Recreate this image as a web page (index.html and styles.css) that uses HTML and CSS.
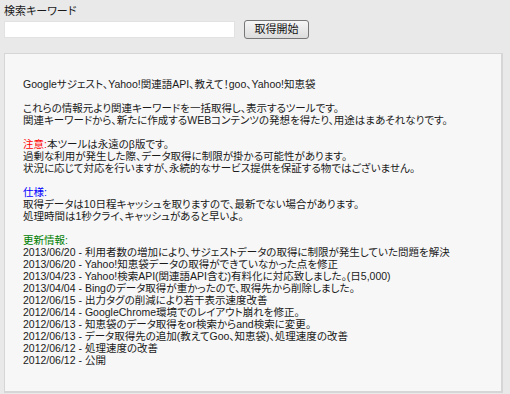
FILE: index.html
```html
<!DOCTYPE html>
<html lang="ja">
<head>
    <meta charset="UTF-8">
    <title>関連キーワード取得ツール</title>
    <link rel="stylesheet" href="styles.css">
</head>
<body>
    <form class="search">
        <label for="keyword">検索キーワード</label>
        <div class="search-row">
            <input type="text" id="keyword">
            <button type="button">取得開始</button>
        </div>
    </form>

    <div class="panel">
        <p>Googleサジェスト、Yahoo!関連語API、教えて！goo、Yahoo!知恵袋</p>

        <p>これらの情報元より関連キーワードを一括取得し、表示するツールです。<br>
        関連キーワードから、新たに作成するWEBコンテンツの発想を得たり、用途はまあそれなりです。</p>

        <p><span class="caution">注意:</span>本ツールは永遠のβ版です。<br>
        過剰な利用が発生した際、データ取得に制限が掛かる可能性があります。<br>
        状況に応じて対応を行いますが、永続的なサービス提供を保証する物ではございません。</p>

        <p><span class="spec">仕様:</span><br>
        取得データは10日程キャッシュを取りますので、最新でない場合があります。<br>
        処理時間は1秒クライ、キャッシュがあると早いよ。</p>

        <p><span class="update">更新情報:</span></p>
        <ul class="history">
            <li>2013/06/20 - 利用者数の増加により、サジェストデータの取得に制限が発生していた問題を解決</li>
            <li>2013/06/20 - Yahoo!知恵袋データの取得ができていなかった点を修正</li>
            <li>2013/04/23 - Yahoo!検索API(関連語API含む)有料化に対応致しました。(日5,000)</li>
            <li>2013/04/04 - Bingのデータ取得が重かったので、取得先から削除しました。</li>
            <li>2012/06/15 - 出力タグの削減により若干表示速度改善</li>
            <li>2012/06/14 - GoogleChrome環境でのレイアウト崩れを修正。</li>
            <li>2012/06/13 - 知恵袋のデータ取得をor検索からand検索に変更。</li>
            <li>2012/06/13 - データ取得先の追加(教えてGoo、知恵袋)、処理速度の改善</li>
            <li>2012/06/12 - 処理速度の改善</li>
            <li>2012/06/12 - 公開</li>
        </ul>
    </div>
</body>
</html>
```

FILE: styles.css
```css
body {
    margin: 0;
    padding: 4px;
    background: #e9e9e9;
    color: #1a1a1a;
    font-family: "Liberation Sans", "Noto Sans CJK JP", sans-serif;
    font-size: 10.5px;
    font-feature-settings: "palt";
}
.search {
    margin: 0;
}
.search label {
    display: block;
    font-size: 11px;
    line-height: 15px;
}
.search-row {
    display: flex;
    align-items: center;
    gap: 9px;
    margin-top: 1px;
}
.search-row input {
    width: 231px;
    height: 17px;
    box-sizing: border-box;
    margin: 0;
    border: 1px solid #e2e2e2;
    background: #fff;
    padding: 0 3px;
}
.search-row button {
    width: 65px;
    height: 19px;
    box-sizing: border-box;
    margin: 0;
    padding: 0;
    border: 1px solid #777;
    border-radius: 3px;
    background: linear-gradient(#f6f6f6, #dcdcdc);
    font-family: inherit;
    font-size: 11px;
    color: #111;
    line-height: 17px;
}
.panel {
    margin-top: 14px;
    width: 499px;
    box-sizing: border-box;
    padding: 24px 18px 25px;
    background: #f7f7f7;
    border: 1px solid #d6d6d6;
    border-right-width: 2px;
    border-bottom-width: 2px;
    line-height: 12px;
}
.panel p {
    margin: 0 0 12px;
}
.caution { color: #ff0000; }
.spec { color: #0000ff; }
.update { color: #008000; }
.panel p:last-of-type {
    margin-bottom: 0;
}
.history {
    list-style: none;
    margin: 0;
    padding: 0;
}
```
